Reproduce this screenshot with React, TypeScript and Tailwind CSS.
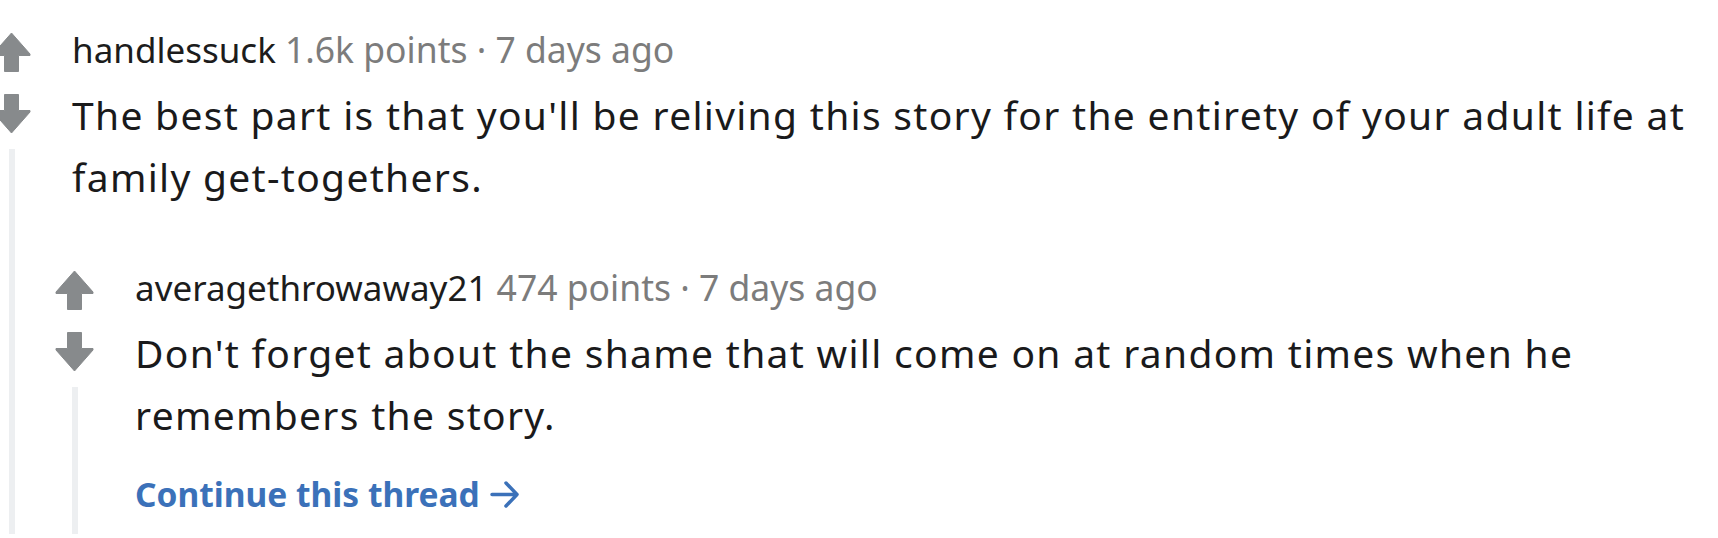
import React from "react";

type CommentData = {
	author: string;
	points: string;
	age: string;
	body: string;
	children?: CommentData[];
	more?: boolean;
};

const thread: CommentData = {
	author: "handlessuck",
	points: "1.6k points",
	age: "7 days ago",
	body: "The best part is that you'll be reliving this story for the entirety of your adult life at family get-togethers.",
	children: [
		{
			author: "averagethrowaway21",
			points: "474 points",
			age: "7 days ago",
			body: "Don't forget about the shame that will come on at random times when he remembers the story.",
			more: true,
		},
	],
};

const VoteArrow = ({ down }: { down?: boolean }) => (
	<svg
		width="39"
		height="40"
		viewBox="0 0 39 40"
		className={down ? "rotate-180" : ""}
		aria-hidden="true"
	>
		<polygon
			points="19.5,1 38,22 38,23.5 26.5,23.5 26.5,39.5 12.5,39.5 12.5,23.5 1,23.5 1,22"
			fill="#878a8c"
			stroke="#878a8c"
			strokeWidth="1"
			strokeLinejoin="round"
		/>
	</svg>
);

const Comment = ({ comment }: { comment: CommentData }) => {
	return (
		<div className="flex">
			{/* Votes and thread line */}
			<div className="flex flex-col items-center w-[39px] shrink-0 pt-[7px]">
				<VoteArrow />
				<div className="mt-[22px]">
					<VoteArrow down />
				</div>
				<div className="mt-[15px] w-[6px] flex-1 bg-[#edeff1]" />
			</div>

			<div className="flex-1 min-w-0 pl-[41px]">
				<div className="text-[35px] leading-[48px] h-[48px] font-['Noto_Sans',sans-serif] whitespace-nowrap">
					<span className="text-[#1c1c1c]">{comment.author}</span>{" "}
					<span className="text-[35.5px] text-[#7c7c7c]">
						{comment.points} · {comment.age}
					</span>
				</div>
				<p className="mt-[11px] text-[39px] leading-[62px] tracking-[1.3px] text-[#1a1a1b] font-['Noto_Sans',sans-serif]">
					{comment.body}
				</p>

				{comment.more && (
					<div className="mt-[24px] pb-[16px]">
						<a
							href="#"
							className="inline-flex items-center gap-[10px] text-[33.5px] leading-[48px] font-bold text-[#3b71b9] font-['Noto_Sans',sans-serif]"
						>
							Continue this thread
							<svg width="30" height="29" viewBox="0 0 30 29" aria-hidden="true">
								<path
									d="M2 14.5 H27 M16 3 L27 14.5 L16 26"
									fill="none"
									stroke="#3b71b9"
									strokeWidth="3.5"
									strokeLinecap="round"
									strokeLinejoin="round"
								/>
							</svg>
						</a>
					</div>
				)}

				{comment.children && (
					<div className="mt-[55px] -ml-[17px]">
						{comment.children.map((c) => (
							<Comment key={c.author} comment={c} />
						))}
					</div>
				)}
			</div>
		</div>
	);
};

export default function App() {
	return (
		<div className="bg-white w-[1718px] h-[538px] overflow-hidden pt-[25px] pr-[18px]">
			<div className="-ml-[8px] h-[600px] flex flex-col">
				<Comment comment={thread} />
			</div>
		</div>
	);
}
